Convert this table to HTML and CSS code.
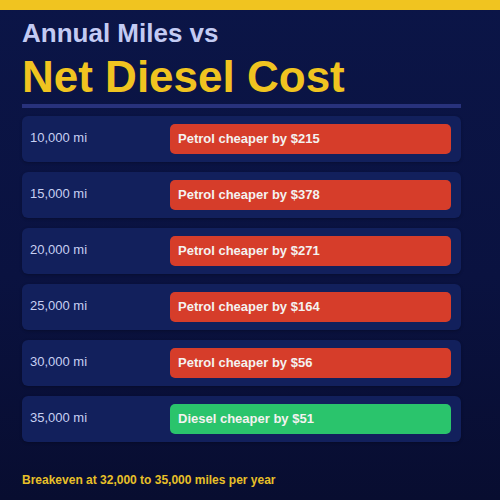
FILE: index.html
```html
<!DOCTYPE html>
<html>
<head>
<meta charset="utf-8">
<link rel="stylesheet" href="styles.css">
</head>
<body>
<div class="topbar"></div>
<main class="page">
  <h1 class="kicker">Annual Miles vs</h1>
  <h2 class="title">Net Diesel Cost</h2>
  <div class="divider"></div>
  <div class="rows">
    <div class="row"><span class="miles">10,000 mi</span><div class="bar petrol">Petrol cheaper by $215</div></div>
    <div class="row"><span class="miles">15,000 mi</span><div class="bar petrol">Petrol cheaper by $378</div></div>
    <div class="row"><span class="miles">20,000 mi</span><div class="bar petrol">Petrol cheaper by $271</div></div>
    <div class="row"><span class="miles">25,000 mi</span><div class="bar petrol">Petrol cheaper by $164</div></div>
    <div class="row"><span class="miles">30,000 mi</span><div class="bar petrol">Petrol cheaper by $56</div></div>
    <div class="row"><span class="miles">35,000 mi</span><div class="bar diesel">Diesel cheaper by $51</div></div>
  </div>
  <p class="note">Breakeven at 32,000 to 35,000 miles per year</p>
</main>
</body>
</html>
```

FILE: styles.css
```css
html, body {
  margin: 0;
  padding: 0;
}
body {
  width: 500px;
  height: 500px;
  overflow: hidden;
  background: linear-gradient(180deg, #0b1547 0%, #0a1240 55%, #080d30 100%);
  font-family: "Liberation Sans", Arial, sans-serif;
}
.topbar {
  height: 10px;
  background: #f0c420;
}
.page {
  padding: 7px 0 0 22px;
  width: 439px;
}
.kicker {
  margin: 0;
  font-size: 26px;
  line-height: 32px;
  font-weight: 700;
  color: #c3cbf3;
}
.title {
  margin: 1px 0 0;
  font-size: 44px;
  line-height: 54px;
  font-weight: 700;
  color: #f0c420;
}
.divider {
  height: 4px;
  background: #28327c;
}
.rows {
  margin-top: 8px;
  display: flex;
  flex-direction: column;
  gap: 10px;
}
.row {
  height: 46px;
  box-sizing: border-box;
  padding: 0 10px 0 8px;
  display: flex;
  align-items: center;
  background: #12205c;
  border-radius: 6px;
  box-shadow: 0 1px 3px rgba(0, 0, 0, 0.25);
}
.miles {
  width: 140px;
  flex: none;
  font-size: 13px;
  line-height: 16px;
  padding-bottom: 3px;
  color: #c8d0f2;
}
.bar {
  flex: 1;
  height: 30px;
  box-sizing: border-box;
  padding: 0 8px 2px;
  display: flex;
  align-items: center;
  border-radius: 5px;
  font-size: 13px;
  font-weight: 700;
  color: #f4f2f0;
}
.petrol {
  background: #d63d2a;
}
.diesel {
  background: #2ac46c;
}
.note {
  margin: 30px 0 0;
  font-size: 12px;
  line-height: 16px;
  font-weight: 700;
  color: #e8c028;
}
```
